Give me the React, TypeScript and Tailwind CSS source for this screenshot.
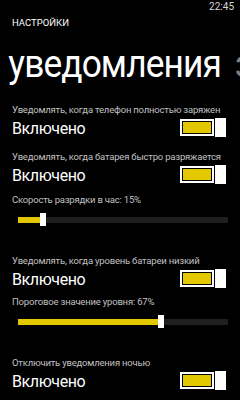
import React from "react"

const font = { fontFamily: 'Roboto, "Noto Sans", sans-serif' }

function Toggle() {
  return (
    <div className="flex items-center gap-[1px] mt-[-1px]">
      <div className="w-[34px] h-[17px] border-2 border-white p-[1px] bg-black">
        <div className="w-full h-full bg-[#e3c800]" />
      </div>
      <div className="w-[11px] h-[19px] bg-white" />
    </div>
  )
}

function SettingRow({ label, className }: { label: string; className?: string }) {
  return (
    <div className={className}>
      <div className="pl-[12px] text-[9.5px] leading-[14px] tracking-[-0.2px] text-[#c0c0c0] whitespace-nowrap">{label}</div>
      <div className="flex justify-between items-start mt-[2px] pl-[12px] pr-[14px]">
        <span className="text-[16px] leading-[20px] tracking-[-0.4px] text-white">Включено</span>
        <Toggle />
      </div>
    </div>
  )
}

function Slider({ label, value, className }: { label: string; value: number; className?: string }) {
  return (
    <div className={className}>
      <div className="pl-[12px] text-[9.5px] leading-[14px] tracking-[-0.2px] text-[#c0c0c0]">{label}</div>
      <div className="mt-[6px] ml-[18px] w-[210px] h-[13px] flex items-center">
        <div className="h-[6px] bg-[#e3c800]" style={{ width: value }} />
        <div className="w-[6px] h-[13px] bg-white" />
        <div className="h-[6px] flex-1 bg-[#1f1f1f]" />
      </div>
    </div>
  )
}

export default function App() {
  return (
    <div className="w-[240px] h-[400px] bg-black overflow-hidden" style={font}>
      <div className="h-[14px] flex justify-end pr-[6px] text-[10px] leading-[14px] text-[#d8d8d8]">22:45</div>
      <div className="mt-[3px] pl-[12px] text-[9.5px] leading-[12px] text-white">НАСТРОЙКИ</div>
      <div className="mt-[15px] pl-[9px] flex whitespace-nowrap text-[38px] leading-[40px] tracking-[-1px] text-white origin-left scale-x-[0.93]">
        <span>уведомления</span>
        <span className="ml-[15px] text-[#808080]">звук</span>
      </div>
      <SettingRow className="mt-[19px]" label="Уведомлять, когда телефон полностью заряжен" />
      <SettingRow className="mt-[11px]" label="Уведомлять, когда батарея быстро разряжается" />
      <Slider className="mt-[7px]" label="Скорость разрядки в час: 15%" value={22} />
      <SettingRow className="mt-[28px]" label="Уведомлять, когда уровень батареи низкий" />
      <Slider className="mt-[5px]" label="Пороговое значение уровня: 67%" value={140} />
      <SettingRow className="mt-[28px]" label="Отключить уведомления ночью" />
    </div>
  )
}
